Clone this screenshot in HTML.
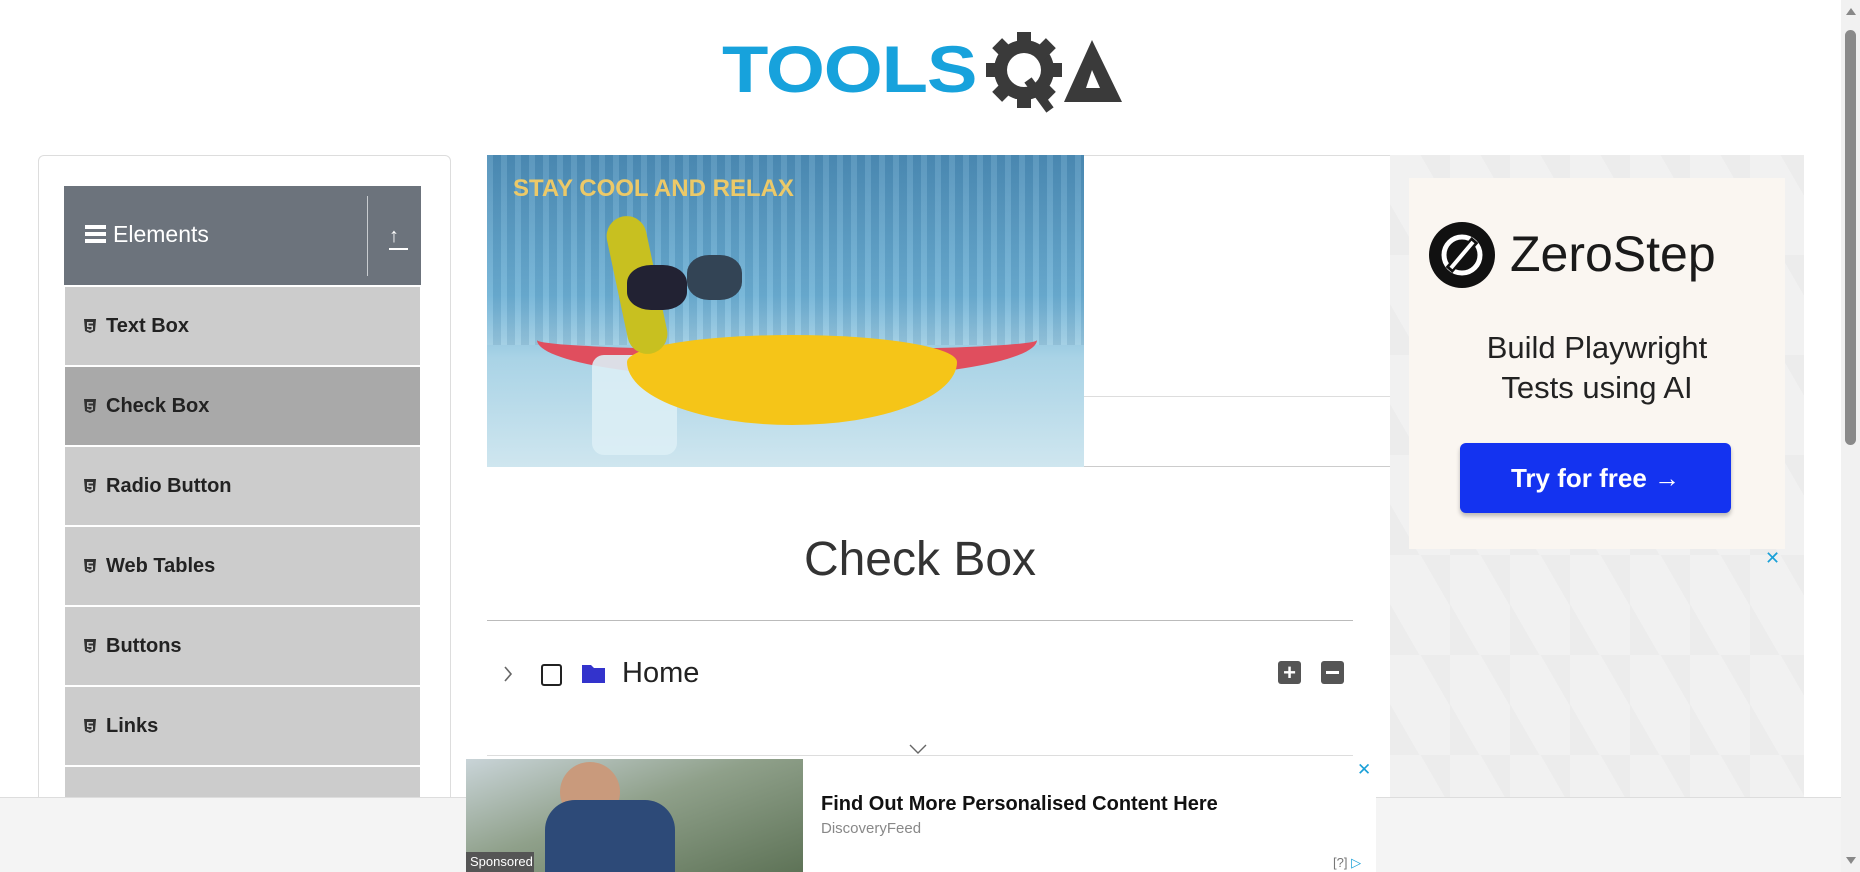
<!DOCTYPE html>
<html style="overflow:hidden;height:872px"><head><meta charset="utf-8"><style>
*{box-sizing:border-box;margin:0;padding:0}
body{width:1860px;height:872px;overflow:hidden;background:#fff;font-family:"Liberation Sans",sans-serif;position:relative}
.abs{position:absolute}
.item{position:absolute;left:65px;width:355px;height:78px;background:#ccc;display:flex;align-items:center;padding-left:18px;font-weight:bold;font-size:20px;color:#222}
.item svg{margin-right:9px}
</style></head><body>
<!-- logo -->
<div class="abs" style="left:722px;top:30px;width:410px;height:85px">
<div class="abs" style="left:0;top:6px;font:bold 66px/66px 'Liberation Sans',sans-serif;color:#17a2dc;letter-spacing:-1px;transform:scaleX(1.15);transform-origin:left">TOOLS</div>
<svg class="abs" style="left:262px;top:0" width="150" height="85" viewBox="0 0 150 85">
<g fill="#3a3a3a"><circle cx="40" cy="40" r="30"/>
<rect x="33" y="2" width="14" height="76"/><rect x="2" y="33" width="76" height="14"/>
<rect x="33" y="2" width="14" height="76" transform="rotate(45 40 40)"/><rect x="33" y="2" width="14" height="76" transform="rotate(-45 40 40)"/></g>
<circle cx="40" cy="40" r="17" fill="#fff"/>
<path d="M44 50 L66 80" stroke="#3a3a3a" stroke-width="9"/>
<path d="M80 72 L108 10 L138 72 Z M102 58 L116 58 L108 40 Z" fill="#3a3a3a" fill-rule="evenodd"/>
</svg></div>
<!-- left panel -->
<div class="abs" style="left:38px;top:155px;width:413px;height:760px;border:1px solid #ddd;border-radius:6px"></div>
<div class="abs" style="left:64px;top:186px;width:357px;height:99px;background:#6c737c;color:#fff">
<div class="abs" style="left:21px;top:39px;width:21px;height:18px;border-top:4px solid #fff;border-bottom:4px solid #fff"><div style="margin-top:3px;height:4px;background:#fff"></div></div>
<div class="abs" style="left:49px;top:35px;font-size:23px">Elements</div>
<div class="abs" style="left:303px;top:10px;width:1px;height:80px;background:#c8ccd0"></div>
<div class="abs" style="left:325px;top:40px;font-size:20px;line-height:20px">↑</div>
<div class="abs" style="left:325px;top:62px;width:19px;height:2px;background:#fff"></div>
</div>
<div class="item" style="top:287px">
<svg width="14" height="16" viewBox="0 0 14 16"><path d="M1 1h12l-1 12-5 2-5-2z" fill="#333"/><path d="M4 4h6v1.5H5.5v2H10V12l-3 1-3-1V10.5h1.5v.5l1.5.5 1.5-.5V9H4z" fill="#ccc"/></svg>Text Box</div>
<div class="item" style="top:367px;background:#a9a9a9">
<svg width="14" height="16" viewBox="0 0 14 16"><path d="M1 1h12l-1 12-5 2-5-2z" fill="#333"/><path d="M4 4h6v1.5H5.5v2H10V12l-3 1-3-1V10.5h1.5v.5l1.5.5 1.5-.5V9H4z" fill="#a9a9a9"/></svg>Check Box</div>
<div class="item" style="top:447px">
<svg width="14" height="16" viewBox="0 0 14 16"><path d="M1 1h12l-1 12-5 2-5-2z" fill="#333"/><path d="M4 4h6v1.5H5.5v2H10V12l-3 1-3-1V10.5h1.5v.5l1.5.5 1.5-.5V9H4z" fill="#ccc"/></svg>Radio Button</div>
<div class="item" style="top:527px">
<svg width="14" height="16" viewBox="0 0 14 16"><path d="M1 1h12l-1 12-5 2-5-2z" fill="#333"/><path d="M4 4h6v1.5H5.5v2H10V12l-3 1-3-1V10.5h1.5v.5l1.5.5 1.5-.5V9H4z" fill="#ccc"/></svg>Web Tables</div>
<div class="item" style="top:607px">
<svg width="14" height="16" viewBox="0 0 14 16"><path d="M1 1h12l-1 12-5 2-5-2z" fill="#333"/><path d="M4 4h6v1.5H5.5v2H10V12l-3 1-3-1V10.5h1.5v.5l1.5.5 1.5-.5V9H4z" fill="#ccc"/></svg>Buttons</div>
<div class="item" style="top:687px">
<svg width="14" height="16" viewBox="0 0 14 16"><path d="M1 1h12l-1 12-5 2-5-2z" fill="#333"/><path d="M4 4h6v1.5H5.5v2H10V12l-3 1-3-1V10.5h1.5v.5l1.5.5 1.5-.5V9H4z" fill="#ccc"/></svg>Links</div>
<div class="item" style="top:767px"></div>
<!-- banner -->
<div class="abs" style="left:487px;top:155px;width:903px;height:312px;border-top:1px solid #ddd;border-bottom:1px solid #ccc"></div>
<div class="abs" style="left:1084px;top:396px;width:306px;height:1px;background:#ddd"></div>
<div class="abs" style="left:487px;top:155px;width:597px;height:312px;overflow:hidden;background:linear-gradient(180deg,#4f8fb8 0%,#6fb2d6 45%,#a9d3e6 65%,#cfe6ef 100%)">
<div class="abs" style="left:0;top:0;width:597px;height:190px;background:repeating-linear-gradient(90deg,rgba(255,255,255,.08) 0 6px,rgba(0,40,80,.08) 6px 14px)"></div>
<div class="abs" style="left:50px;top:145px;width:500px;height:80px;border-bottom:30px solid #e04e5e;border-radius:0 0 50% 50%"></div>
<div class="abs" style="left:105px;top:200px;width:85px;height:100px;background:#dbeef5;border-radius:12px;opacity:.9"></div>
<div class="abs" style="left:140px;top:180px;width:330px;height:90px;background:#f5c518;border-radius:50% 50% 50% 50%/30% 30% 70% 70%"></div>
<div class="abs" style="left:130px;top:60px;width:40px;height:140px;background:#c8c020;border-radius:20px;transform:rotate(-12deg)"></div>
<div class="abs" style="left:140px;top:110px;width:60px;height:45px;background:#223;border-radius:40%"></div>
<div class="abs" style="left:200px;top:100px;width:55px;height:45px;background:#345;border-radius:40%"></div>
<div class="abs" style="left:26px;top:20px;font:bold 24px 'Liberation Sans',sans-serif;color:#ecc968">STAY COOL AND RELAX</div>
</div>
<!-- heading -->
<div class="abs" style="left:487px;top:532px;width:866px;text-align:center;font-size:48px;color:#333">Check Box</div>
<div class="abs" style="left:487px;top:620px;width:866px;height:1px;background:#bbb"></div>
<!-- tree -->
<svg class="abs" style="left:503px;top:665px" width="10" height="18" viewBox="0 0 10 18"><path d="M2 2l6 7-6 7" stroke="#666" stroke-width="1.6" fill="none"/></svg>
<div class="abs" style="left:541px;top:664px;width:21px;height:22px;border:2px solid #222;border-radius:3px"></div>
<svg class="abs" style="left:580px;top:663px" width="27" height="22" viewBox="0 0 27 22"><path d="M2 2h9l3 3h11v15H2z" fill="#3333cc"/></svg>
<div class="abs" style="left:622px;top:657px;font-size:29px;color:#222">Home</div>
<div class="abs" style="left:1278px;top:661px;width:23px;height:23px;background:#555;border-radius:3px;color:#fff;font:bold 22px/23px 'Liberation Sans';text-align:center">+</div>
<div class="abs" style="left:1321px;top:661px;width:23px;height:23px;background:#555;border-radius:3px"><div style="margin:10px 5px;height:3px;background:#fff"></div></div>
<svg class="abs" style="left:909px;top:743px" width="18" height="12" viewBox="0 0 18 12"><path d="M1 2l8 8 8-8" stroke="#666" stroke-width="1.4" fill="none"/></svg>
<div class="abs" style="left:487px;top:755px;width:866px;height:1px;background:#ddd"></div>
<!-- right ad -->
<div class="abs" style="left:1390px;top:155px;width:414px;height:642px;background:#f1f1f1;background-image:linear-gradient(60deg,rgba(0,0,0,.02) 25%,transparent 25%,transparent 75%,rgba(0,0,0,.02) 75%);background-size:60px 100px"></div>
<div class="abs" style="left:1409px;top:178px;width:376px;height:371px;background:#faf6f1"></div>
<svg class="abs" style="left:1429px;top:222px" width="66" height="66" viewBox="0 0 66 66"><circle cx="33" cy="33" r="33" fill="#111"/><circle cx="33" cy="33" r="18" fill="none" stroke="#fff" stroke-width="5"/><path d="M20 48L46 18" stroke="#111" stroke-width="9"/><path d="M22 46L44 20" stroke="#fff" stroke-width="4"/></svg>
<div class="abs" style="left:1510px;top:225px;font-size:50px;color:#1a1a1a">ZeroStep</div>
<div class="abs" style="left:1409px;top:328px;width:376px;text-align:center;font-size:31px;line-height:40px;color:#222">Build Playwright<br>Tests using AI</div>
<div class="abs" style="left:1460px;top:443px;width:271px;height:70px;background:#1433f0;border-radius:6px;box-shadow:0 3px 4px rgba(0,0,0,.25);color:#fff;font:bold 26px/70px 'Liberation Sans';text-align:center">Try for free →</div>
<div class="abs" style="left:1765px;top:548px;color:#1aa0d8;font-size:18px">✕</div>
<!-- bottom bar -->
<div class="abs" style="left:0;top:797px;width:1841px;height:75px;background:#f4f4f4;border-top:1px solid #ddd"></div>
<div class="abs" style="left:466px;top:759px;width:910px;height:113px;background:#fff"></div>
<div class="abs" style="left:466px;top:759px;width:337px;height:113px;background:linear-gradient(160deg,#c9d4d8 0%,#8fa08a 45%,#5e7357 100%)"></div>
<div class="abs" style="left:560px;top:762px;width:60px;height:60px;background:#c99a7c;border-radius:50%"></div>
<div class="abs" style="left:545px;top:800px;width:130px;height:72px;background:#2d4a78;border-radius:30px 30px 0 0"></div>
<div class="abs" style="left:466px;top:852px;width:68px;height:20px;background:#555;color:#fff;font-size:13px;line-height:20px;padding-left:4px">Sponsored</div>
<div class="abs" style="left:821px;top:793px;font:bold 20px 'Liberation Sans';color:#111">Find Out More Personalised Content Here</div>
<div class="abs" style="left:821px;top:820px;font-size:15px;color:#888">DiscoveryFeed</div>
<div class="abs" style="left:1357px;top:760px;color:#1aa0d8;font-size:17px">✕</div>
<div class="abs" style="left:1333px;top:855px;font-size:13px;color:#777">[?] <span style="color:#1aa0d8">▷</span></div>
<!-- scrollbar -->
<div class="abs" style="left:1841px;top:0;width:19px;height:872px;background:#f1f1f1"></div>
<div class="abs" style="left:1845px;top:30px;width:11px;height:415px;background:#8a8a8a;border-radius:6px"></div>
<div class="abs" style="left:1846px;top:8px;width:0;height:0;border:5px solid transparent;border-bottom:7px solid #888;border-top:0"></div>
<div class="abs" style="left:1846px;top:857px;width:0;height:0;border:5px solid transparent;border-top:7px solid #888;border-bottom:0"></div>
</body></html>
